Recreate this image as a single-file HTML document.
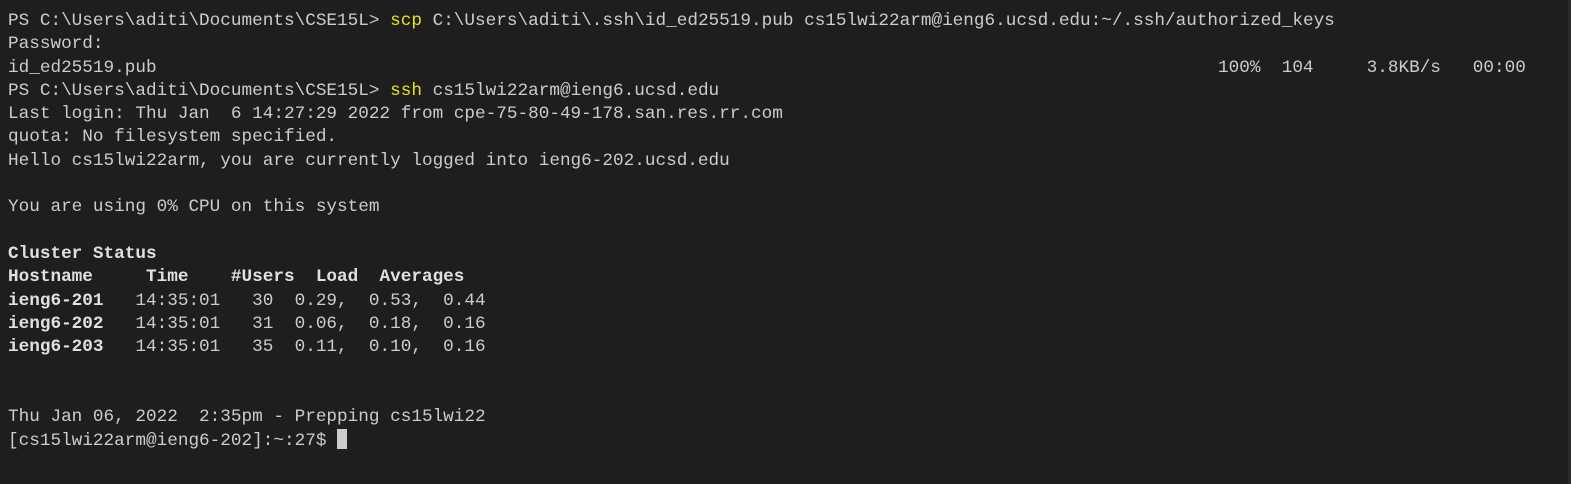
<!DOCTYPE html>
<html><head><meta charset="utf-8"><style>
html,body{margin:0;padding:0;background:#1e1e1e;width:1571px;height:484px;overflow:hidden}
pre{margin:0;position:absolute;left:8px;top:10px;font-family:"Liberation Mono",monospace;font-size:17.7px;line-height:23.3px;color:#cccccc;white-space:pre}
.y{color:#e5e510}
b{font-weight:bold;color:#e0e0e0}
.cur{display:inline-block;width:10px;height:20px;background:#cccccc;vertical-align:-4px}
.edge{position:absolute;right:0;top:0;width:3px;height:484px;background:#2a2a2a}
</style></head><body>
<pre>PS C:\Users\aditi\Documents\CSE15L&gt; <span class="y">scp</span> C:\Users\aditi\.ssh\id_ed25519.pub cs15lwi22arm@ieng6.ucsd.edu:~/.ssh/authorized_keys
Password:
id_ed25519.pub                                                                                                    100%  104     3.8KB/s   00:00
PS C:\Users\aditi\Documents\CSE15L&gt; <span class="y">ssh</span> cs15lwi22arm@ieng6.ucsd.edu
Last login: Thu Jan  6 14:27:29 2022 from cpe-75-80-49-178.san.res.rr.com
quota: No filesystem specified.
Hello cs15lwi22arm, you are currently logged into ieng6-202.ucsd.edu

You are using 0% CPU on this system

<b>Cluster Status</b>
<b>Hostname     Time    #Users  Load  Averages</b>
<b>ieng6-201</b>   14:35:01   30  0.29,  0.53,  0.44
<b>ieng6-202</b>   14:35:01   31  0.06,  0.18,  0.16
<b>ieng6-203</b>   14:35:01   35  0.11,  0.10,  0.16


Thu Jan 06, 2022  2:35pm - Prepping cs15lwi22
[cs15lwi22arm@ieng6-202]:~:27$ <span class="cur"></span></pre>
<div class="edge"></div>
</body></html>
